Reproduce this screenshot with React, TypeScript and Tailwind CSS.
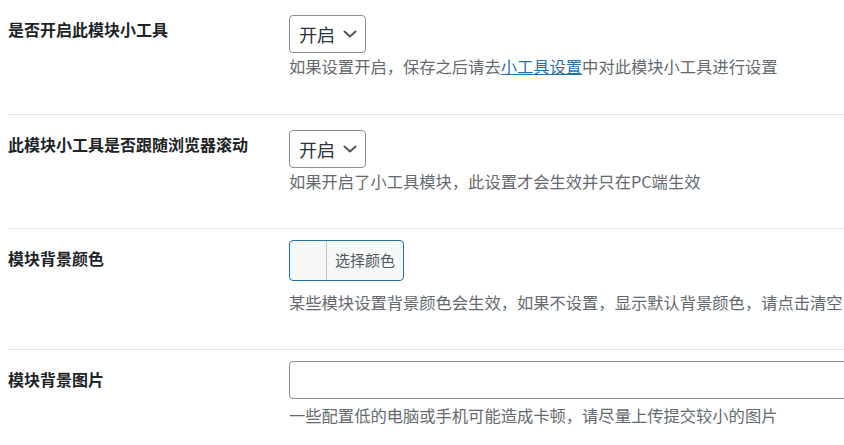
import React from "react"

function Chevron() {
  return (
    <svg width="14" height="8" viewBox="0 0 14 8" className="ml-2" fill="none">
      <path d="M1.5 1.5l5.5 5 5.5-5" stroke="#50575e" strokeWidth="2" strokeLinecap="round" strokeLinejoin="round" />
    </svg>
  )
}

function FakeSelect({ value }: { value: string }) {
  return (
    <div className="flex items-center w-[77px] h-[38px] border border-[#8c8f94] rounded-[4px] pl-[9px] text-[18px] leading-[22px] text-[#2c3338] bg-white">
      {value}
      <Chevron />
    </div>
  )
}

function Label({ children }: { children: React.ReactNode }) {
  return (
    <div className="w-[281px] shrink-0 pt-[18px] text-[16px] leading-[22px] font-bold text-[#1d2327]">
      {children}
    </div>
  )
}

export default function App() {
  return (
    <div className="w-[844px] h-[445px] overflow-hidden bg-white pl-2 font-['Noto_Sans_CJK_SC',sans-serif]">
      {/* 是否开启 */}
      <div className="flex h-[115px] border-b border-[#e6e6e6]">
        <Label>是否开启此模块小工具</Label>
        <div className="pt-[15px]">
          <FakeSelect value="开启" />
          <p className="mt-[2px] text-[16.3px] leading-[22px] text-[#646970] whitespace-nowrap">
            如果设置开启，保存之后请去
            <a href="#" className="text-[#2271b1] underline">小工具设置</a>
            中对此模块小工具进行设置
          </p>
        </div>
      </div>

      {/* 跟随滚动 */}
      <div className="flex h-[114px] border-b border-[#e6e6e6]">
        <Label>此模块小工具是否跟随浏览器滚动</Label>
        <div className="pt-[15px]">
          <FakeSelect value="开启" />
          <p className="mt-[2px] text-[16.3px] leading-[22px] text-[#646970] whitespace-nowrap">
            如果开启了小工具模块，此设置才会生效并只在PC端生效
          </p>
        </div>
      </div>

      {/* 背景颜色 */}
      <div className="flex h-[121px] border-b border-[#e6e6e6]">
        <Label>模块背景颜色</Label>
        <div className="pt-[11px] min-w-0">
          <button className="flex items-stretch w-[115px] h-[41px] border border-[#2271b1] rounded-[4px] bg-[#f6f7f7] overflow-hidden">
            <span className="w-[37px] shrink-0 border-r border-[#c3c4c7]" />
            <span className="flex items-center pl-[8px] text-[15px] text-[#50575e]">选择颜色</span>
          </button>
          <p className="mt-[10px] text-[16.3px] leading-[22px] text-[#646970] whitespace-nowrap">
            某些模块设置背景颜色会生效，如果不设置，显示默认背景颜色，请点击清空
          </p>
        </div>
      </div>

      {/* 背景图片 */}
      <div className="flex h-[120px]">
        <Label>模块背景图片</Label>
        <div className="pt-[11px] min-w-0">
          <input
            type="text"
            className="block w-[640px] h-[38px] border border-[#8c8f94] rounded-[4px] bg-white px-2 text-[16px] outline-none"
          />
          <p className="mt-[5px] text-[16.3px] leading-[22px] text-[#646970] whitespace-nowrap">
            一些配置低的电脑或手机可能造成卡顿，请尽量上传提交较小的图片
          </p>
        </div>
      </div>
    </div>
  )
}
